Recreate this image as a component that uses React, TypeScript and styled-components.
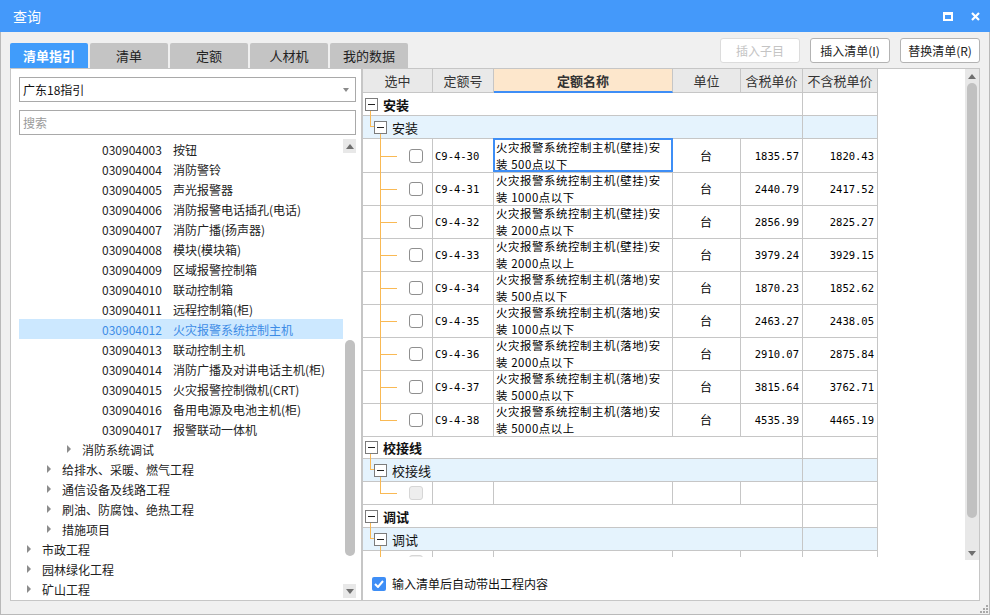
import React from "react";
import styled, { createGlobalStyle } from "styled-components";

const Color = {
  Title: "#4499fa",
  TabActive: "#409cfb",
  TabIdle: "#c4c4c4",
  Frame: "#f0f0f0",
  Line: "#c6c6c6",
  Guide: "#f9b954",
  SubRow: "#e5f3fd",
  Select: "#cce8ff",
  SelectText: "#3d8ce6",
  Focus: "#3e8ef6",
};

const SANS = `"Noto Sans CJK SC", "Microsoft YaHei", sans-serif`;
const MONO = `"DejaVu Sans Mono", "Liberation Mono", monospace`;
const COLS = "70px 61px 179px 68px 62px 75px";

const GlobalStyle = createGlobalStyle`
  html, body { margin: 0; padding: 0; background: #fff; }
  body { font-family: ${SANS}; }
  * { box-sizing: border-box; }
`;

type Leaf = { level: number; code?: string; name: string; folder?: boolean; selected?: boolean };

const tree: Leaf[] = [
  { level: 4, code: "030904003", name: "按钮" },
  { level: 4, code: "030904004", name: "消防警铃" },
  { level: 4, code: "030904005", name: "声光报警器" },
  { level: 4, code: "030904006", name: "消防报警电话插孔(电话)" },
  { level: 4, code: "030904007", name: "消防广播(扬声器)" },
  { level: 4, code: "030904008", name: "模块(模块箱)" },
  { level: 4, code: "030904009", name: "区域报警控制箱" },
  { level: 4, code: "030904010", name: "联动控制箱" },
  { level: 4, code: "030904011", name: "远程控制箱(柜)" },
  { level: 4, code: "030904012", name: "火灾报警系统控制主机", selected: true },
  { level: 4, code: "030904013", name: "联动控制主机" },
  { level: 4, code: "030904014", name: "消防广播及对讲电话主机(柜)" },
  { level: 4, code: "030904015", name: "火灾报警控制微机(CRT)" },
  { level: 4, code: "030904016", name: "备用电源及电池主机(柜)" },
  { level: 4, code: "030904017", name: "报警联动一体机" },
  { level: 3, name: "消防系统调试", folder: true },
  { level: 2, name: "给排水、采暖、燃气工程", folder: true },
  { level: 2, name: "通信设备及线路工程", folder: true },
  { level: 2, name: "刷油、防腐蚀、绝热工程", folder: true },
  { level: 2, name: "措施项目", folder: true },
  { level: 1, name: "市政工程", folder: true },
  { level: 1, name: "园林绿化工程", folder: true },
  { level: 1, name: "矿山工程", folder: true },
];

type Quota = { no: string; mount: string; scale: string; tax: string; net: string };

const quotas: Quota[] = [
  { no: "C9-4-30", mount: "壁挂", scale: "500点以下", tax: "1835.57", net: "1820.43" },
  { no: "C9-4-31", mount: "壁挂", scale: "1000点以下", tax: "2440.79", net: "2417.52" },
  { no: "C9-4-32", mount: "壁挂", scale: "2000点以下", tax: "2856.99", net: "2825.27" },
  { no: "C9-4-33", mount: "壁挂", scale: "2000点以上", tax: "3979.24", net: "3929.15" },
  { no: "C9-4-34", mount: "落地", scale: "500点以下", tax: "1870.23", net: "1852.62" },
  { no: "C9-4-35", mount: "落地", scale: "1000点以下", tax: "2463.27", net: "2438.05" },
  { no: "C9-4-36", mount: "落地", scale: "2000点以下", tax: "2910.07", net: "2875.84" },
  { no: "C9-4-37", mount: "落地", scale: "5000点以下", tax: "3815.64", net: "3762.71" },
  { no: "C9-4-38", mount: "落地", scale: "5000点以上", tax: "4535.39", net: "4465.19" },
];

const tabs = ["清单指引", "清单", "定额", "人材机", "我的数据"];

const Group: React.FC<{ title: string; children?: React.ReactNode }> = ({ title, children }) => (
  <>
    <GroupRow>
      <GroupCell>
        <ToggleBox />
        {title}
        <VGuide $x={7} $top={17} />
      </GroupCell>
      <Cell />
    </GroupRow>
    <GroupRow $sub>
      <GroupCell $sub>
        <Elbow />
        <ToggleBox />
        {title}
        <VGuide $x={17} $top={17} />
      </GroupCell>
      <Cell />
    </GroupRow>
    {children}
  </>
);

const BlankLine: React.FC<{ last?: boolean }> = ({ last }) => (
  <BlankRow>
    <Cell $pad={46}>
      <VGuide $x={17} $top={0} $half={last} />
      {last && <HGuide />}
      <Check $disabled />
    </Cell>
    <Cell />
    <Cell />
    <Cell />
    <Cell />
    <Cell />
  </BlankRow>
);

export default function App() {
  return (
    <>
      <GlobalStyle />
      <Window>
        <TitleBar>
          <span className="title">查询</span>
          <MaxIcon />
          <svg width="9" height="9" viewBox="0 0 9 9">
            <path d="M1 1L8 8M8 1L1 8" stroke="#fff" strokeWidth="2.2" />
          </svg>
        </TitleBar>
        <Body>
          <TopBar>
            <Tabs>
              {tabs.map((t, i) => (
                <Tab key={t} $active={i === 0}>
                  {t}
                </Tab>
              ))}
            </Tabs>
            <Actions>
              <ActionButton disabled>插入子目</ActionButton>
              <ActionButton>插入清单(I)</ActionButton>
              <ActionButton>替换清单(R)</ActionButton>
            </Actions>
          </TopBar>

          <Main>
            <LeftPanel>
              <Field>
                <span>广东18指引</span>
                <DropCaret />
              </Field>
              <Field $placeholder>搜索</Field>
              <TreeBox>
                <TreeRows>
                  {tree.map((n) => (
                    <TreeRow key={n.name} $level={n.level} $selected={n.selected}>
                      <Expander>{n.folder && <Caret />}</Expander>
                      {n.code && <Code>{n.code}</Code>}
                      <span>{n.name}</span>
                    </TreeRow>
                  ))}
                </TreeRows>
                <Scrollbar $width={13} $track="transparent">
                  <ArrowCap $up $bg="#e8e8e8" />
                  <ThumbLane>
                    <Thumb $offset={187} $length={216} />
                  </ThumbLane>
                  <ArrowCap $bg="#e8e8e8" />
                </Scrollbar>
              </TreeBox>
            </LeftPanel>

            <RightPanel>
              <TableArea>
                <TableClip>
                  <HeadRow>
                    <HeadCell>选中</HeadCell>
                    <HeadCell>定额号</HeadCell>
                    <HeadCell $active>定额名称</HeadCell>
                    <HeadCell>单位</HeadCell>
                    <HeadCell>含税单价</HeadCell>
                    <HeadCell>不含税单价</HeadCell>
                  </HeadRow>

                  <Group title="安装">
                    {quotas.map((q, i) => (
                      <DataRow key={q.no}>
                        <Cell $pad={46}>
                          <VGuide $x={17} $top={0} $half={i === quotas.length - 1} />
                          <HGuide />
                          <Check />
                        </Cell>
                        <Cell $mono>{q.no}</Cell>
                        <NameCell $focus={i === 0}>
                          <span>火灾报警系统控制主机({q.mount})安</span>
                          <span>装 {q.scale}</span>
                        </NameCell>
                        <Cell $align="center">台</Cell>
                        <Cell $mono $align="right">{q.tax}</Cell>
                        <Cell $mono $align="right">{q.net}</Cell>
                      </DataRow>
                    ))}
                  </Group>

                  <Group title="校接线">
                    <BlankLine last />
                  </Group>

                  <Group title="调试">
                    <BlankLine />
                  </Group>
                </TableClip>
                <Scrollbar $width={14} $track="#e8e8e8">
                  <ArrowCap $up />
                  <ThumbLane>
                    <Thumb $offset={0} $length={435} />
                  </ThumbLane>
                  <ArrowCap />
                </Scrollbar>
              </TableArea>
              <Footer>
                <CheckedBox>
                  <svg width="10" height="8" viewBox="0 0 10 8">
                    <path d="M1 4L4 7L9 1" fill="none" stroke="#fff" strokeWidth="2" />
                  </svg>
                </CheckedBox>
                输入清单后自动带出工程内容
              </Footer>
            </RightPanel>
          </Main>

          <StatusStrip>
            <svg width="10" height="10" viewBox="0 0 10 10">
              <g fill="#a9a9a9">
                <rect x="8" y="2" width="2" height="2" />
                <rect x="5" y="5" width="2" height="2" />
                <rect x="8" y="5" width="2" height="2" />
                <rect x="2" y="8" width="2" height="2" />
                <rect x="5" y="8" width="2" height="2" />
                <rect x="8" y="8" width="2" height="2" />
              </g>
            </svg>
          </StatusStrip>
        </Body>
      </Window>
    </>
  );
}

const Window = styled.div`
  width: 990px;
  height: 615px;
  display: flex;
  flex-direction: column;
  font-family: ${SANS};
  overflow: hidden;
`;

const TitleBar = styled.div`
  height: 32px;
  flex: none;
  display: flex;
  align-items: center;
  gap: 18px;
  padding: 0 10px 0 13px;
  background: ${Color.Title};
  color: #fff;
  font-size: 14px;

  > .title {
    flex: 1;
  }
`;

const MaxIcon = styled.span`
  width: 10px;
  height: 9px;
  border: 2px solid #fff;
  border-top-width: 3px;
`;

const Body = styled.div`
  flex: 1;
  display: flex;
  flex-direction: column;
  padding: 0 9px;
  background: ${Color.Frame};
  border: 1px solid #b9b9b9;
  border-top: none;
`;

const TopBar = styled.div`
  height: 36px;
  flex: none;
  display: flex;
  justify-content: space-between;
`;

const Tabs = styled.div`
  display: flex;
  gap: 2px;
  align-self: flex-end;
`;

const Tab = styled.div<{ $active?: boolean }>`
  width: 78px;
  height: 25px;
  display: flex;
  align-items: center;
  justify-content: center;
  border-radius: 2px 2px 0 0;
  background: ${(p) => (p.$active ? Color.TabActive : Color.TabIdle)};
  color: ${(p) => (p.$active ? "#fff" : "#222")};
  font-size: 13px;
  font-weight: ${(p) => (p.$active ? 700 : 400)};
`;

const Actions = styled.div`
  display: flex;
  gap: 10px;
  margin-top: 6px;
  height: 25px;
`;

const ActionButton = styled.button`
  width: 80px;
  height: 25px;
  padding: 0;
  font-family: ${SANS};
  font-size: 12px;
  color: #222;
  background: #fff;
  border: 1px solid #b3b3b3;
  border-radius: 3px;

  &:disabled {
    color: #c4c4c4;
    border-color: #dcdcdc;
  }
`;

const Main = styled.div`
  height: 533px;
  flex: none;
  display: flex;
`;

const LeftPanel = styled.div`
  width: 352px;
  flex: none;
  display: flex;
  flex-direction: column;
  gap: 8px;
  padding: 8px 5px 2px 8px;
  background: #fff;
  border: 1px solid ${Color.Line};
`;

const Field = styled.div<{ $placeholder?: boolean }>`
  height: 25px;
  flex: none;
  display: flex;
  align-items: center;
  justify-content: space-between;
  padding: 0 6px 0 3px;
  border: 1px solid #a9a9a9;
  font-size: 12px;
  color: ${(p) => (p.$placeholder ? "#9a9a9a" : "#111")};
`;

const DropCaret = styled.span`
  border-top: 4px solid #8a8a8a;
  border-left: 3px solid transparent;
  border-right: 3px solid transparent;
`;

const TreeBox = styled.div`
  height: 459px;
  margin-top: -4px;
  display: flex;
  overflow: hidden;
`;

const TreeRows = styled.div`
  flex: 1;
`;

const TreeRow = styled.div<{ $level: number; $selected?: boolean }>`
  height: 20px;
  display: flex;
  align-items: center;
  padding-left: ${(p) => 8 + 20 * (p.$level - 1)}px;
  white-space: nowrap;
  font-size: 12px;
  background: ${(p) => (p.$selected ? Color.Select : "transparent")};
  color: ${(p) => (p.$selected ? Color.SelectText : "#222")};
`;

const Expander = styled.span`
  width: 15px;
  flex: none;
  display: flex;
  align-items: center;
`;

const Caret = styled.span`
  border-left: 4px solid #8c8c8c;
  border-top: 4px solid transparent;
  border-bottom: 4px solid transparent;
`;

const Code = styled.span`
  width: 71px;
  flex: none;
`;

const Scrollbar = styled.div<{ $width: number; $track: string }>`
  width: ${(p) => p.$width}px;
  flex: none;
  display: flex;
  flex-direction: column;
  background: ${(p) => p.$track};
`;

const ArrowCap = styled.div<{ $up?: boolean; $bg?: string }>`
  height: 14px;
  flex: none;
  display: flex;
  align-items: center;
  justify-content: center;
  background: ${(p) => p.$bg || "transparent"};

  &::before {
    content: "";
    border-left: 4px solid transparent;
    border-right: 4px solid transparent;
    ${(p) => (p.$up ? "border-bottom: 5px solid #6f6f6f;" : "border-top: 5px solid #6f6f6f;")}
  }
`;

const ThumbLane = styled.div`
  flex: 1;
  display: flex;
  flex-direction: column;
  align-items: center;
`;

const Thumb = styled.div<{ $offset: number; $length: number }>`
  width: 10px;
  margin-top: ${(p) => p.$offset}px;
  height: ${(p) => p.$length}px;
  border-radius: 5px;
  background: #c1c1c1;
`;

const RightPanel = styled.div`
  flex: 1;
  display: flex;
  flex-direction: column;
  background: #fff;
  border: 1px solid ${Color.Line};
`;

const TableArea = styled.div`
  height: 491px;
  flex: none;
  display: flex;
`;

const TableClip = styled.div`
  flex: 1;
  height: 488px;
  overflow: hidden;
`;

const HeadRow = styled.div`
  display: grid;
  grid-template-columns: ${COLS};
  width: 515px;
  height: 24px;
  background: #e9e9e9;
`;

const HeadCell = styled.div<{ $active?: boolean }>`
  display: flex;
  align-items: center;
  justify-content: center;
  border-right: 1px solid ${Color.Line};
  border-bottom: ${(p) => (p.$active ? `2px solid ${Color.Focus}` : `1px solid ${Color.Line}`)};
  background: ${(p) => (p.$active ? "#fde7cc" : "transparent")};
  color: #333;
  font-size: 13px;
  font-weight: ${(p) => (p.$active ? 700 : 400)};
`;

const GroupRow = styled.div<{ $sub?: boolean }>`
  display: grid;
  grid-template-columns: 440px 75px;
  width: 515px;
  height: 23px;
  background: ${(p) => (p.$sub ? Color.SubRow : "#fff")};
`;

const GroupCell = styled.div<{ $sub?: boolean }>`
  position: relative;
  display: flex;
  align-items: center;
  gap: 5px;
  padding-left: ${(p) => (p.$sub ? 11 : 2)}px;
  border-right: 1px solid ${Color.Line};
  border-bottom: 1px solid ${Color.Line};
  font-size: 13px;
  font-weight: ${(p) => (p.$sub ? 400 : 700)};
  color: #111;
`;

const ToggleBox = styled.span`
  width: 13px;
  height: 13px;
  flex: none;
  display: flex;
  align-items: center;
  justify-content: center;
  border: 1px solid #7c7c7c;
  background: #fff;
  position: relative;
  z-index: 3;

  &::before {
    content: "";
    width: 7px;
    height: 1px;
    background: #222;
  }
`;

/* tree connector strokes drawn over the cell borders */
const VGuide = styled.span<{ $x: number; $top: number; $half?: boolean }>`
  position: absolute;
  display: block;
  z-index: 2;
  left: ${(p) => p.$x}px;
  top: ${(p) => p.$top}px;
  width: 1px;
  height: ${(p) => (p.$half ? "50%" : `calc(100% + 1px - ${p.$top}px)`)};
  background: ${Color.Guide};
`;

const HGuide = styled.span`
  position: absolute;
  display: block;
  z-index: 2;
  left: 17px;
  top: 50%;
  width: 17px;
  height: 1px;
  background: ${Color.Guide};
`;

const Elbow = styled.span`
  position: absolute;
  display: block;
  z-index: 2;
  left: 7px;
  top: -1px;
  width: 5px;
  height: 12px;
  border-left: 1px solid ${Color.Guide};
  border-bottom: 1px solid ${Color.Guide};
`;

const DataRow = styled.div`
  display: grid;
  grid-template-columns: ${COLS};
  width: 515px;
  height: 33px;
`;

const BlankRow = styled(DataRow)`
  height: 23px;
`;

const Cell = styled.div<{ $align?: "left" | "center" | "right"; $mono?: boolean; $pad?: number }>`
  position: relative;
  display: flex;
  align-items: center;
  justify-content: ${(p) =>
    p.$align === "right" ? "flex-end" : p.$align === "center" ? "center" : "flex-start"};
  padding: 0 3px 0 ${(p) => p.$pad ?? 2}px;
  border-right: 1px solid ${Color.Line};
  border-bottom: 1px solid ${Color.Line};
  font-family: ${(p) => (p.$mono ? MONO : SANS)};
  font-size: ${(p) => (p.$mono ? "10.5px" : "12px")};
  color: #000;
`;

const NameCell = styled.div<{ $focus?: boolean }>`
  position: relative;
  display: flex;
  flex-direction: column;
  padding: 0 2px;
  border-right: 1px solid ${Color.Line};
  border-bottom: 1px solid ${Color.Line};
  font-size: 11.4px;
  letter-spacing: 0.6px;
  line-height: 16.5px;
  color: #000;
  white-space: nowrap;

  &::after {
    content: "";
    display: ${(p) => (p.$focus ? "block" : "none")};
    position: absolute;
    inset: -1px -1px 0 -1px;
    border: 2px solid ${Color.Focus};
  }
`;

const Check = styled.span<{ $disabled?: boolean }>`
  width: 14px;
  height: 14px;
  border-radius: 3px;
  border: 1px solid ${(p) => (p.$disabled ? "#d6d6d6" : "#8f8f8f")};
  background: ${(p) => (p.$disabled ? "#eeeeee" : "#fff")};
`;

const Footer = styled.div`
  display: flex;
  align-items: center;
  gap: 6px;
  padding: 15px 0 0 9px;
  font-size: 12px;
  color: #111;
`;

const CheckedBox = styled.span`
  width: 14px;
  height: 14px;
  display: flex;
  align-items: center;
  justify-content: center;
  border-radius: 2px;
  background: ${Color.Focus};
`;

const StatusStrip = styled.div`
  flex: 1;
  display: flex;
  justify-content: flex-end;
  align-items: flex-end;
  margin-right: -8px;
  padding-bottom: 1px;
`;
